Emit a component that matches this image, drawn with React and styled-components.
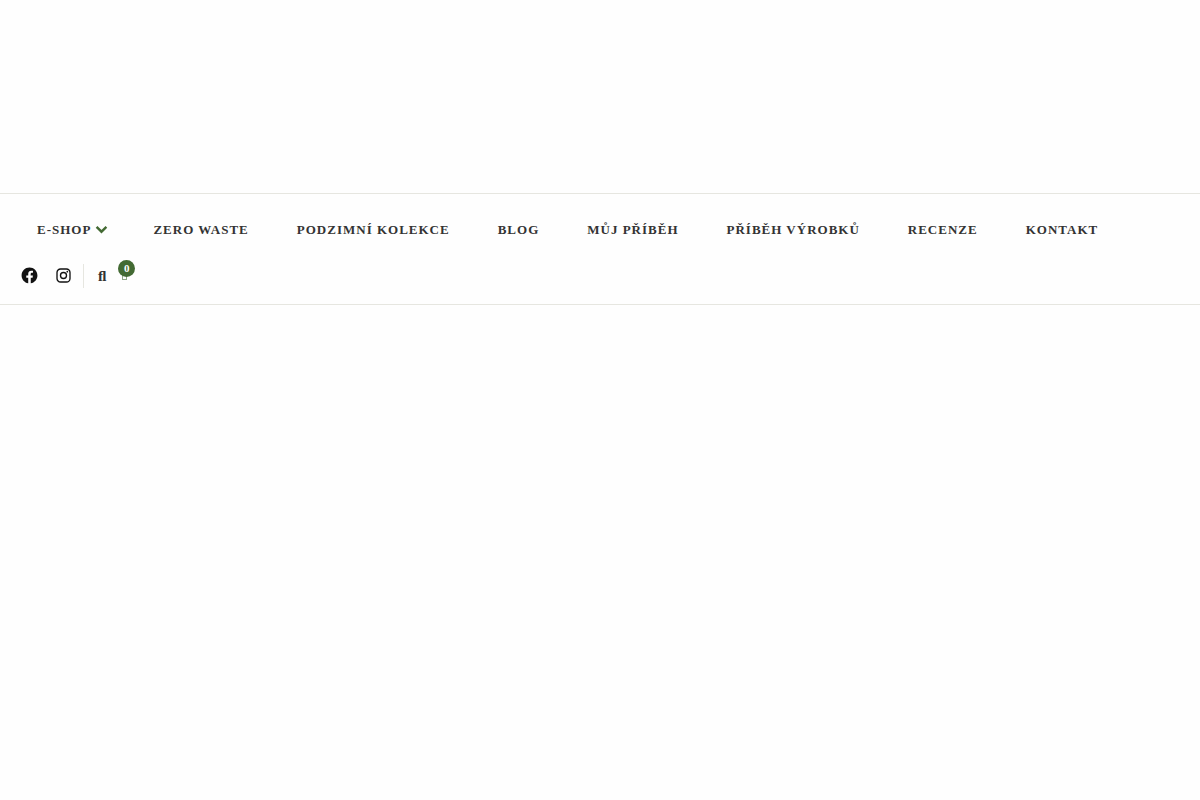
import React from "react";
import styled, { createGlobalStyle } from "styled-components";

const GlobalStyle = createGlobalStyle`
  body {
    margin: 0;
    background: #fefefe;
    font-family: "Liberation Serif", "Times New Roman", serif;
    color: #333;
  }
`;

const Header = styled.header`
  padding-top: 193px;
`;

const Bar = styled.div`
  border-top: 1px solid #e6e6e0;
  border-bottom: 1px solid #e6e6e0;
  padding: 16px 13px;
`;

const Menu = styled.ul`
  display: flex;
  flex-wrap: wrap;
  margin: 0;
  padding: 0;
  list-style: none;
`;

const MenuItem = styled.li`
  display: flex;
  align-items: center;
  height: 40px;
  padding: 0 24px;
`;

const MenuLink = styled.a`
  color: inherit;
  font-size: 13px;
  font-weight: 700;
  line-height: 20px;
  letter-spacing: 1px;
  text-transform: uppercase;
  text-decoration: none;
`;

const SubmenuButton = styled.button`
  display: flex;
  margin: 0 -3px 0 4px;
  padding: 0;
  border: 0;
  background: none;
  color: #436a33;
  cursor: pointer;
`;

const Tools = styled.div`
  display: flex;
  align-items: center;
  height: 24px;
  margin-top: 14px;
  padding-left: 7px;
`;

const Social = styled.div`
  display: flex;
  align-items: center;
  gap: 15px;
  height: 22px;
  padding: 0 10px 2px 0;
  border-right: 1px solid #e6e6e0;
`;

const SocialLink = styled.a`
  display: flex;
  color: #121212;
`;

const SearchButton = styled.button`
  margin-left: 14px;
  padding: 0;
  border: 0;
  background: none;
  color: inherit;
  font-family: inherit;
  font-size: 15px;
  font-weight: 700;
  line-height: 20px;
  cursor: pointer;
`;

const CartLink = styled.a`
  position: relative;
  display: flex;
  margin-left: 16px;
  padding-bottom: 2px;
  color: #436a33;
  text-decoration: none;
`;

const Count = styled.span`
  position: absolute;
  top: -10px;
  left: -4px;
  width: 17px;
  height: 17px;
  border-radius: 50%;
  background: #436a33;
  color: #fff;
  font-size: 11px;
  font-weight: 700;
  line-height: 17px;
  text-align: center;
`;

const links = [
  { label: "E-shop", submenu: true },
  { label: "Zero waste" },
  { label: "Podzimní kolekce" },
  { label: "Blog" },
  { label: "Můj příběh" },
  { label: "Příběh výrobků" },
  { label: "Recenze" },
  { label: "Kontakt" },
];

const Chevron = () => (
  <svg width="13" height="10" viewBox="0 0 13 10" fill="none" aria-hidden="true">
    <path d="M1.6 1.8 6.5 6.7 11.4 1.8" stroke="currentColor" strokeWidth="2.4" />
  </svg>
);

const Facebook = () => (
  <svg width="19" height="19" viewBox="0 0 24 24" fill="currentColor" aria-hidden="true">
    <path d="M12 2C6.5 2 2 6.5 2 12c0 5 3.7 9.1 8.4 9.9v-7H7.9V12h2.5V9.8c0-2.5 1.5-3.9 3.8-3.9 1.1 0 2.2.2 2.2.2v2.5h-1.3c-1.2 0-1.6.8-1.6 1.6V12h2.8l-.4 2.9h-2.3v7C18.3 21.1 22 17 22 12c0-5.5-4.5-10-10-10z" />
  </svg>
);

const Instagram = () => (
  <svg width="19" height="19" viewBox="0 0 24 24" fill="none" stroke="currentColor" aria-hidden="true">
    <rect x="3.8" y="3.8" width="16.4" height="16.4" rx="4.5" strokeWidth="1.7" />
    <circle cx="12" cy="12" r="3.8" strokeWidth="1.7" />
    <circle cx="16.8" cy="7.2" r="1.1" fill="currentColor" stroke="none" />
  </svg>
);

const CartBox = () => (
  <svg width="5" height="10" viewBox="0 0 5 10" fill="none" aria-hidden="true">
    <rect x="0.5" y="0.5" width="4" height="9" stroke="currentColor" strokeOpacity="0.6" />
  </svg>
);

function App() {
  return (
    <>
      <GlobalStyle />
      <Header>
        <Bar>
          <nav>
            <Menu>
              {links.map((link) => (
                <MenuItem key={link.label}>
                  <MenuLink href="#">{link.label}</MenuLink>
                  {link.submenu && (
                    <SubmenuButton type="button" aria-label="Podmenu">
                      <Chevron />
                    </SubmenuButton>
                  )}
                </MenuItem>
              ))}
            </Menu>
          </nav>
          <Tools>
            <Social>
              <SocialLink href="#" aria-label="Facebook">
                <Facebook />
              </SocialLink>
              <SocialLink href="#" aria-label="Instagram">
                <Instagram />
              </SocialLink>
            </Social>
            <SearchButton type="button" aria-label="Hledat">
              ﬂ
            </SearchButton>
            <CartLink href="#" aria-label="Košík">
              <CartBox />
              <Count>0</Count>
            </CartLink>
          </Tools>
        </Bar>
      </Header>
    </>
  );
}

export default App;
